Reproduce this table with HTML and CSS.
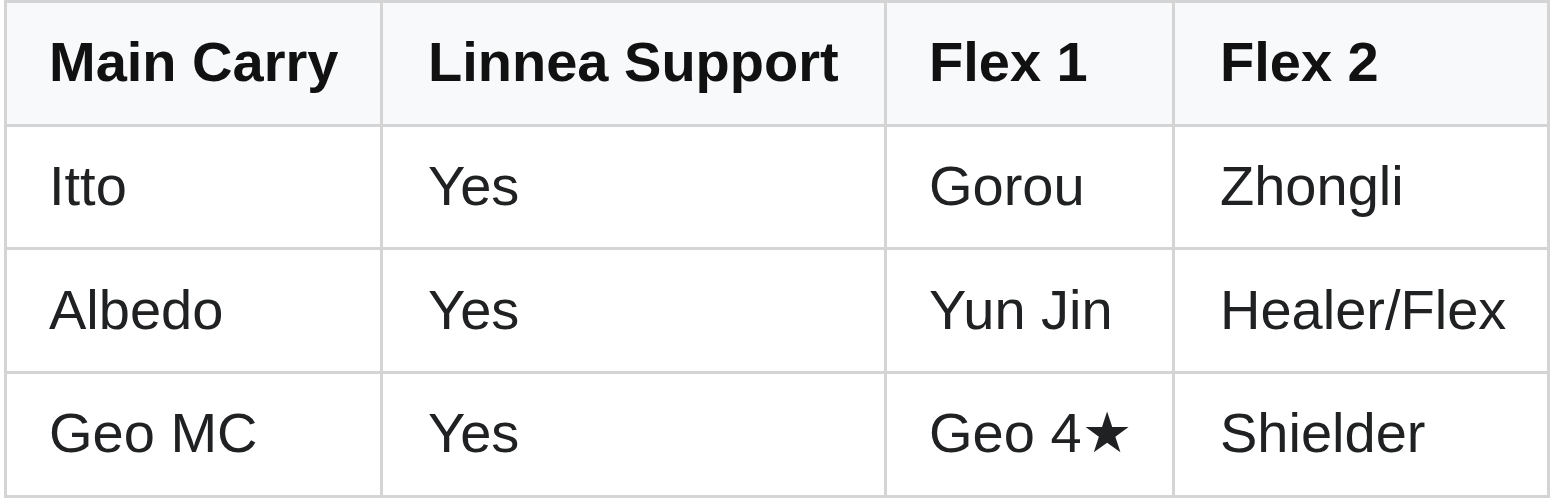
FILE: index.html
```html
<!DOCTYPE html>
<html>
<head>
<meta charset="utf-8">
<link rel="stylesheet" href="styles.css">
</head>
<body>
<table class="grid">
  <thead>
    <tr>
      <th class="c1">Main Carry</th>
      <th class="c2">Linnea Support</th>
      <th class="c3">Flex 1</th>
      <th class="c4">Flex 2</th>
    </tr>
  </thead>
  <tbody>
    <tr><td>Itto</td><td>Yes</td><td>Gorou</td><td>Zhongli</td></tr>
    <tr><td>Albedo</td><td>Yes</td><td>Yun Jin</td><td>Healer/Flex</td></tr>
    <tr><td>Geo MC</td><td>Yes</td><td>Geo 4★</td><td>Shielder</td></tr>
  </tbody>
</table>
</body>
</html>
```
FILE: styles.css
```css
html, body {
  margin: 0;
  padding: 0;
  background: #ffffff;
}
.grid {
  margin-left: 4px;
  border-collapse: separate;
  border-spacing: 0;
  table-layout: fixed;
  width: 1546px;
  border-top: 3px solid #d4d4d4;
  border-left: 3px solid #d4d4d4;
  font-family: "Liberation Sans", Arial, sans-serif;
  font-size: 56px;
  color: #202122;
}
.grid th,
.grid td {
  box-sizing: border-box;
  height: 123.7px;
  padding: 27px 40px 29px 42px;
  line-height: 64px;
  text-align: left;
  white-space: nowrap;
  border-right: 3px solid #d4d4d4;
  border-bottom: 3px solid #d4d4d4;
}
.grid th:nth-child(2),
.grid td:nth-child(2),
.grid th:nth-child(4),
.grid td:nth-child(4) {
  padding-left: 45px;
}
.grid th {
  background: #f8f9fa;
  font-weight: bold;
  color: #111;
}
.c1 { width: 376px; }
.c2 { width: 504px; }
.c3 { width: 288px; }
.c4 { width: 375px; }
```
